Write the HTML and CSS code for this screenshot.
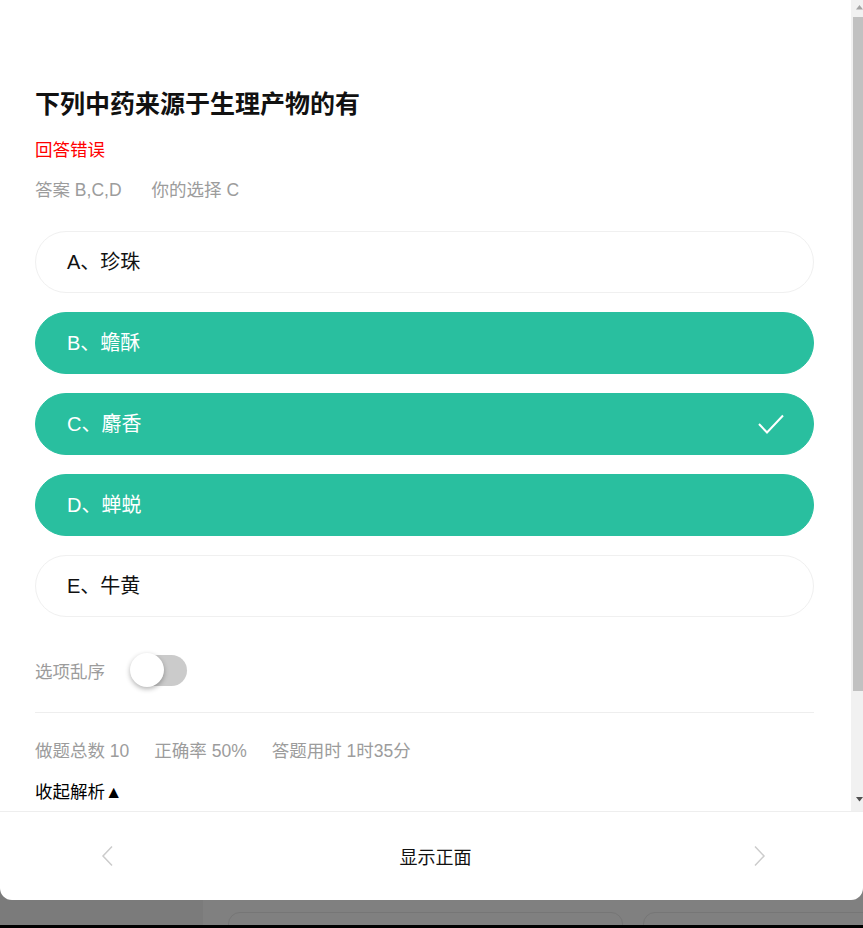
FILE: index.html
```html
<!DOCTYPE html>
<html lang="zh-CN">
<head>
  <meta charset="UTF-8">
  <meta name="viewport" content="width=device-width, initial-scale=1.0">
  <title>答题解析</title>
  <link rel="stylesheet" href="styles.css">
</head>
<body>
  <div class="screen">
    <!-- page behind the mask -->
    <div class="backdrop">
      <div class="side"></div>
      <div class="main">
        <div class="bg-card"></div>
        <div class="bg-card"></div>
      </div>
    </div>

    <div class="modal">
      <div class="body">
        <div class="content">
          <h1 class="question">下列中药来源于生理产物的有</h1>
          <div class="result">回答错误</div>
          <div class="answer">
            <span>答案 B,C,D</span>
            <span>你的选择 C</span>
          </div>

          <div class="options">
            <div class="option"><span>A、珍珠</span></div>
            <div class="option right"><span>B、蟾酥</span></div>
            <div class="option right"><span>C、麝香</span>
              <svg class="check" width="28" height="22" viewBox="0 0 28 22">
                <polyline points="2,11 10,19.5 26,2.5" fill="none" stroke="#fff" stroke-width="2"/>
              </svg>
            </div>
            <div class="option right"><span>D、蝉蜕</span></div>
            <div class="option"><span>E、牛黄</span></div>
          </div>

          <div class="shuffle">
            <span>选项乱序</span>
            <div class="switch"><div class="knob"></div></div>
          </div>

          <div class="stats">
            <span>做题总数 10</span>
            <span>正确率 50%</span>
            <span>答题用时 1时35分</span>
          </div>
          <div class="toggle-analysis">收起解析▲</div>
        </div>

        <!-- scrollbar of the sheet -->
        <div class="scrollbar">
          <div class="sb-btn">
            <svg width="12" height="17" viewBox="0 0 12 17"><polygon points="5,9.5 8.5,5 12,9.5" fill="#a3a3a3"/></svg>
          </div>
          <div class="sb-track"><div class="sb-thumb"></div></div>
          <div class="sb-btn">
            <svg width="12" height="17" viewBox="0 0 12 17"><polygon points="5,3 12,3 8.5,7.5" fill="#505050"/></svg>
          </div>
        </div>
      </div>

      <div class="footer">
        <svg width="14" height="22" viewBox="0 0 14 22">
          <polyline points="11,1.5 2,11 11,20.5" fill="none" stroke="#ccc" stroke-width="1.5"/>
        </svg>
        <span class="flip">显示正面</span>
        <svg width="14" height="22" viewBox="0 0 14 22">
          <polyline points="3,1.5 12,11 3,20.5" fill="none" stroke="#ccc" stroke-width="1.5"/>
        </svg>
      </div>
    </div>
  </div>
</body>
</html>
```

FILE: styles.css
```css
body {
  margin: 0;
  background: #000;
  font-family: "Liberation Sans", "Noto Sans CJK SC", sans-serif;
}

.screen {
  position: relative;
  height: 925px;
  overflow: hidden;
  background: #808080;
}

.backdrop {
  display: flex;
  height: 100%;
}

.side {
  width: 203px;
  flex-shrink: 0;
  background: #7b7b7b;
}

.main {
  flex: 1;
  min-width: 0;
  overflow: hidden;
  display: flex;
  gap: 20px;
  padding: 912px 0 0 25px;
}

.bg-card {
  width: 393px;
  height: 60px;
  flex-shrink: 0;
  border: 1px solid #767676;
  border-radius: 12px;
}

/* modal sheet */
.modal {
  position: absolute;
  top: 0;
  left: 0;
  right: 0;
  height: 900px;
  background: #fff;
  border-radius: 0 0 12px 12px;
  display: flex;
  flex-direction: column;
  overflow: hidden;
}

.body {
  flex: 1;
  min-height: 0;
  display: flex;
}

.content {
  flex: 1;
  overflow: hidden;
  padding: 87px 37px 0 35px;
}

.scrollbar {
  width: 12px;
  display: flex;
  flex-direction: column;
  background: #f1f1f1;
}

.sb-btn {
  height: 17px;
}

.sb-btn svg {
  display: block;
}

.sb-track {
  flex: 1;
}

.sb-thumb {
  height: 674px;
  margin-left: 2px;
  background: #c1c1c1;
}

.question {
  margin: 0;
  font-size: 25px;
  line-height: 34px;
  font-weight: bold;
  color: #111;
}

.result {
  margin-top: 17px;
  font-size: 17.5px;
  line-height: 24px;
  color: #f00;
}

.answer {
  display: flex;
  gap: 30px;
  margin-top: 16px;
  font-size: 17.5px;
  line-height: 24px;
  color: #9c9c9c;
}

.options {
  display: flex;
  flex-direction: column;
  gap: 19px;
  margin-top: 29px;
}

.option {
  height: 62px;
  box-sizing: border-box;
  border: 1px solid #f0f0f0;
  border-radius: 31px;
  display: flex;
  align-items: center;
  justify-content: space-between;
  padding: 0 28px 3px 31px;
  font-size: 20px;
  color: #111;
}

.option.right {
  background: #29bf9f;
  border-color: #29bf9f;
  color: #fff;
}

.check {
  margin-top: 3px;
}

.shuffle {
  display: flex;
  align-items: center;
  gap: 25px;
  height: 34px;
  margin-top: 36px;
  font-size: 17.5px;
  color: #9c9c9c;
}

.switch {
  position: relative;
  width: 50px;
  height: 31px;
  margin-left: 7px;
  border-radius: 16px;
  background: #cbcbcb;
}

.knob {
  position: absolute;
  left: -7px;
  top: -2px;
  width: 34px;
  height: 34px;
  border-radius: 50%;
  background: #fff;
  box-shadow: 0 2px 5px rgba(0, 0, 0, 0.3);
}

.stats {
  display: flex;
  gap: 25px;
  margin-top: 25px;
  padding-top: 26px;
  border-top: 1px solid #eee;
  font-size: 17.5px;
  line-height: 24px;
  color: #9c9c9c;
}

.toggle-analysis {
  margin-top: 17px;
  font-size: 17.5px;
  line-height: 24px;
  color: #000;
}

.footer {
  height: 88px;
  flex-shrink: 0;
  border-top: 1px solid #eee;
  display: flex;
  align-items: center;
  justify-content: space-between;
  padding: 0 97px 0 101px;
}

.flip {
  font-size: 18px;
  color: #111;
  margin-left: 4px;
}
```
